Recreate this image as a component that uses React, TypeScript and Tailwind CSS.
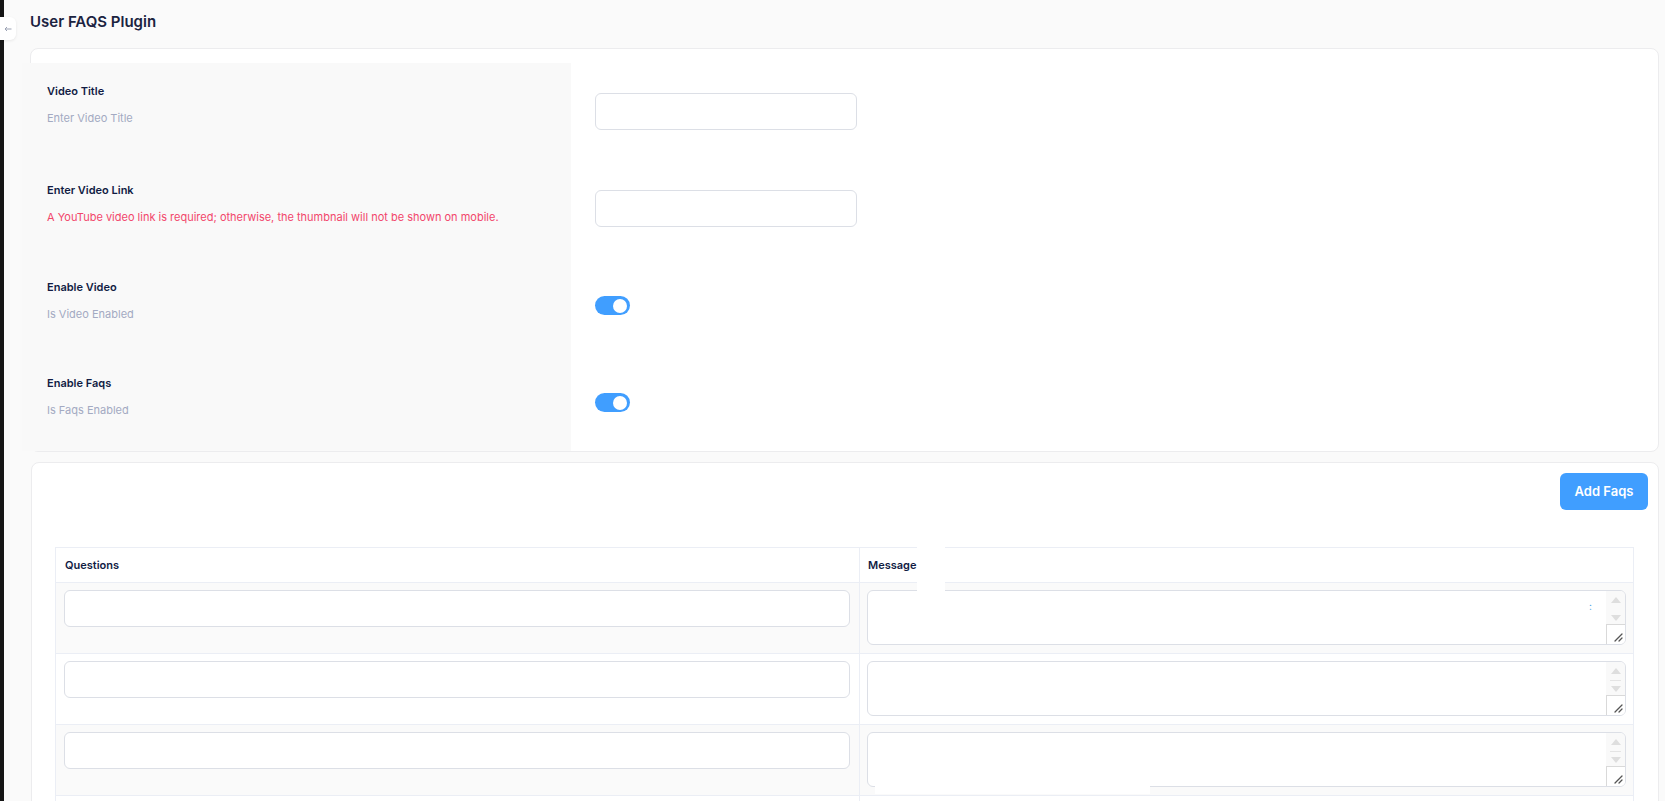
import { useState } from 'react';

interface SettingRow {
  id: string;
  label: string;
  hint: string;
  hintClass: string;
  blockClass: string;
  kind: 'input' | 'switch';
}

const SETTINGS: SettingRow[] = [
  {
    id: 'title',
    label: 'Video Title',
    hint: 'Enter Video Title',
    hintClass: 'text-[#a3aac2]',
    blockClass: 'pb-[14px]',
    kind: 'input',
  },
  {
    id: 'link',
    label: 'Enter Video Link',
    hint: 'A YouTube video link is required; otherwise, the thumbnail will not be shown on mobile.',
    hintClass: 'text-[#f2466b]',
    blockClass: 'pb-[10px]',
    kind: 'input',
  },
  {
    id: 'video',
    label: 'Enable Video',
    hint: 'Is Video Enabled',
    hintClass: 'text-[#a3aac2]',
    blockClass: 'pb-[10px]',
    kind: 'switch',
  },
  {
    id: 'faqs',
    label: 'Enable Faqs',
    hint: 'Is Faqs Enabled',
    hintClass: 'text-[#a3aac2]',
    blockClass: 'pb-[12px]',
    kind: 'switch',
  },
];

function Toggle({ on, onChange }: { on: boolean; onChange: () => void }) {
  return (
    <button
      type="button"
      onClick={onChange}
      className={`relative flex h-[19px] w-[35px] items-center rounded-full px-[3px] ${
        on ? 'justify-end bg-[#409eff]' : 'justify-start bg-[#dcdfe6]'
      }`}
    >
      <span className="block h-[14px] w-[14px] rounded-full bg-white" />
    </button>
  );
}

function MessageBox({ divider }: { divider: boolean }) {
  return (
    <div className="flex h-[55px] w-full overflow-hidden rounded-md border border-[#dcdfe6] bg-white">
      <textarea className="h-full flex-1 resize-none bg-transparent px-3 py-2 text-[12px] outline-none" />
      <div className="flex w-[19px] flex-col bg-[#f9f9f9]">
        <div className="flex flex-1 flex-col items-center justify-between pt-[6px] pb-[3px]">
          <span className="h-0 w-0 border-x-[5px] border-b-[6px] border-x-transparent border-b-[#dedede]" />
          {divider && <span className="h-px w-[11px] bg-[#e4e4e4]" />}
          <span className="h-0 w-0 border-x-[5px] border-t-[6px] border-x-transparent border-t-[#dedede]" />
        </div>
        <div className="flex h-[20px] items-end justify-end border-t border-l border-[#d9d9d9] bg-white pr-[2px] pb-[2px]">
          <svg width="10" height="10" viewBox="0 0 10 10">
            <path d="M9 2 L2 9 M9 6 L6 9" stroke="#555" strokeWidth="1.3" strokeLinecap="round" />
          </svg>
        </div>
      </div>
    </div>
  );
}

export default function App() {
  const [switches, setSwitches] = useState<Record<string, boolean>>({ video: true, faqs: true });
  const faqRows = [1, 2, 3, 4];

  return (
    <div className="relative flex min-h-screen bg-[#fafafa] font-['Inter','Noto_Sans',sans-serif]">
      <aside className="w-[4px] shrink-0 bg-[#151515]" />

      {/* collapse button over the sidebar edge */}
      <button
        type="button"
        className="absolute top-[17px] left-0 flex h-[23px] w-4 items-center justify-center rounded-r-md bg-white shadow-[0_1px_3px_rgba(0,0,0,0.08)]"
      >
        <svg width="8" height="6" viewBox="0 0 8 6">
          <path d="M7.5 3 H1 M3 1 L1 3 L3 5" stroke="#9aa1b3" strokeWidth="1" fill="none" />
        </svg>
      </button>

      <main className="flex-1 pt-3 pr-[6px] pb-10 pl-[26px]">
        <h1 className="mb-4 text-[15px] leading-5 font-semibold text-[#1b2340]">User FAQS Plugin</h1>

        {/* Settings Card */}
        <div className="rounded-lg border border-[#ececee] bg-white pt-[14px]">
          <div className="-ml-[9px]">
            {SETTINGS.map((row) => (
              <div key={row.id} className="grid h-[97px] grid-cols-[549px_1fr]">
                <div className={`flex flex-col justify-center bg-[#f9f9f9] pl-[25px] ${row.blockClass}`}>
                  <div className="text-[11px] leading-4 font-semibold text-[#111c44]">{row.label}</div>
                  <div className={`mt-[11px] text-[11px] leading-4 ${row.hintClass}`}>{row.hint}</div>
                </div>
                <div className="flex items-center pl-6">
                  {row.kind === 'input' ? (
                    <input className="h-[37px] w-[262px] rounded-md border border-[#dcdfe6] bg-white px-3 text-[12px] outline-none" />
                  ) : (
                    <Toggle
                      on={!!switches[row.id]}
                      onChange={() => setSwitches((s) => ({ ...s, [row.id]: !s[row.id] }))}
                    />
                  )}
                </div>
              </div>
            ))}
          </div>
        </div>

        {/* FAQ Card */}
        <div className="mt-[10px] ml-px rounded-lg border border-[#ececee] bg-white pt-[10px] pr-[10px] pb-6 pl-[23px]">
          <div className="flex justify-end">
            <button
              type="button"
              className="h-[37px] w-[88px] rounded-md bg-[#409eff] text-[13px] font-semibold text-white"
            >
              Add Faqs
            </button>
          </div>

          <div className="mt-[37px] mr-[14px] border border-[#ebeef5]">
            <div className="grid h-[35px] grid-cols-[804px_1fr] border-b border-[#ebeef5] bg-white">
              <div className="flex items-center border-r border-[#ebeef5] pl-[9px] text-[11px] font-semibold text-[#111c44]">
                Questions
              </div>
              <div className="flex items-center pl-2 text-[11px] font-semibold text-[#111c44]">Message</div>
            </div>
            {faqRows.map((n) => (
              <div
                key={n}
                className={`grid h-[71px] grid-cols-[804px_1fr] border-b border-[#ebeef5] ${
                  n % 2 === 1 ? 'bg-[#fafafa]' : 'bg-white'
                }`}
              >
                <div className="border-r border-[#ebeef5] pt-[7px] pr-[9px] pl-2">
                  <input className="h-[37px] w-full rounded-md border border-[#dcdfe6] bg-white px-3 text-[12px] outline-none" />
                </div>
                <div className="px-[7px] pt-[7px]">
                  <MessageBox divider={n !== 1} />
                </div>
              </div>
            ))}
          </div>
        </div>
      </main>

      {/* stray marks captured in the screenshot */}
      <div className="absolute top-[545px] left-[917px] h-[46px] w-[28px] bg-white" />
      <div className="absolute top-[783px] left-[875px] h-[11px] w-[275px] bg-white" />
      <div className="absolute top-[601px] left-[1589px] text-[10px] leading-none text-[#4aa3e8]">:</div>
    </div>
  );
}
